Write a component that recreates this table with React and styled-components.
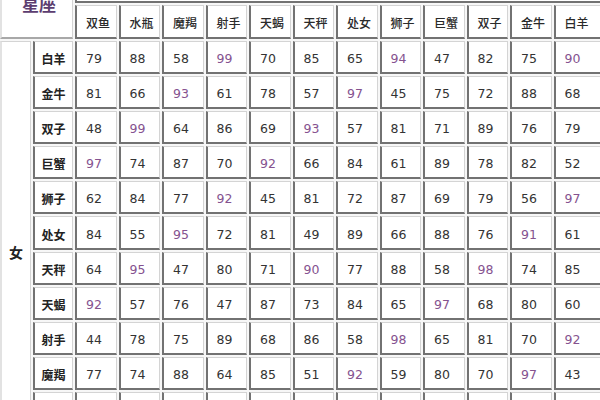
import React from "react";
import styled, { createGlobalStyle } from "styled-components";

const signs = ["双鱼", "水瓶", "魔羯", "射手", "天蝎", "天秤", "处女", "狮子", "巨蟹", "双子", "金牛", "白羊"];

const rows = [
  ["白羊", [79, 88, 58, 99, 70, 85, 65, 94, 47, 82, 75, 90]],
  ["金牛", [81, 66, 93, 61, 78, 57, 97, 45, 75, 72, 88, 68]],
  ["双子", [48, 99, 64, 86, 69, 93, 57, 81, 71, 89, 76, 79]],
  ["巨蟹", [97, 74, 87, 70, 92, 66, 84, 61, 89, 78, 82, 52]],
  ["狮子", [62, 84, 77, 92, 45, 81, 72, 87, 69, 79, 56, 97]],
  ["处女", [84, 55, 95, 72, 81, 49, 89, 66, 88, 76, 91, 61]],
  ["天秤", [64, 95, 47, 80, 71, 90, 77, 88, 58, 98, 74, 85]],
  ["天蝎", [92, 57, 76, 47, 87, 73, 84, 65, 97, 68, 80, 60]],
  ["射手", [44, 78, 75, 89, 68, 86, 58, 98, 65, 81, 70, 92]],
  ["魔羯", [77, 74, 88, 64, 85, 51, 92, 59, 80, 70, 97, 43]],
  ["水瓶", [69, 87, 72, 91, 63, 95, 70, 84, 55, 90, 66, 78]],
  ["双鱼", [85, 62, 79, 73, 96, 68, 88, 76, 93, 64, 71, 82]],
];

const GlobalStyle = createGlobalStyle`
  html, body {
    margin: 0;
    padding: 0;
    overflow: hidden;
    background: #fbfbfb;
  }
  #root {
    width: 600px;
    height: 400px;
    overflow: hidden;
  }
`;

// the table starts above the visible area: only the lower half of 星座 shows
const Grid = styled.div`
  display: grid;
  grid-template-columns: 31px 40px repeat(11, 41.5px) 52px;
  grid-template-rows: 34px 34px repeat(12, 33.2px);
  gap: 2px;
  margin-top: -31.5px;
  background: #f7f7f7;
`;

const Cell = styled.div`
  box-sizing: border-box;
  display: flex;
  align-items: center;
  justify-content: ${(p) => (p.$center ? "center" : "flex-start")};
  padding: 3px 0 0 ${(p) => (p.$center ? 0 : 8)}px;
  background: #fff;
  border-left: 2px solid #727272;
  border-bottom: 2px solid #727272;
  border-top: 1px solid #d4d4d4;
  border-right: 1px solid #d4d4d4;
`;

const Corner = styled(Cell)`
  grid-column: span 2;
  grid-row: span 2;
  border-left-color: #e2e2e2;
  border-bottom-color: #a8a8a8;
  font-family: "Noto Sans CJK SC", sans-serif;
  font-size: 17px;
  font-weight: 700;
  color: #5c3d70;
  padding: 0 0 0 4px;
`;

const Gender = styled(Cell)`
  grid-column: ${(p) => (p.$wide ? "span 12" : "auto")};
  grid-row: ${(p) => (p.$wide ? "auto" : "span 12")};
  border-left-color: ${(p) => (p.$wide ? "#727272" : "#e2e2e2")};
  font-family: "Noto Sans CJK SC", sans-serif;
  font-size: 14px;
  font-weight: 700;
  color: #222;
`;

const Head = styled(Cell)`
  font-family: "Noto Sans CJK SC", sans-serif;
  font-size: 12px;
  font-weight: 500;
  color: #2a2a2a;
  padding-left: 9px;
`;

const Label = styled(Cell)`
  font-family: "Noto Sans CJK SC", sans-serif;
  font-size: 12px;
  font-weight: 700;
  color: #222;
`;

const Score = styled(Cell)`
  font-family: "DejaVu Sans", sans-serif;
  font-size: 12.5px;
  color: ${(p) => (p.$high ? "#85528f" : "#333")};
  padding-left: 9px;
`;

export default function App() {
  return (
    <>
      <GlobalStyle />
      <Grid>
        <Corner $center>星座</Corner>
        <Gender $wide $center />
        {signs.map((s) => (
          <Head key={s}>{s}</Head>
        ))}
        <Gender $center>女</Gender>
        {rows.map(([name, values]) => (
          <React.Fragment key={name}>
            <Label $center>{name}</Label>
            {values.map((v, i) => (
              <Score key={i} $high={v >= 90}>
                {v}
              </Score>
            ))}
          </React.Fragment>
        ))}
      </Grid>
    </>
  );
}
